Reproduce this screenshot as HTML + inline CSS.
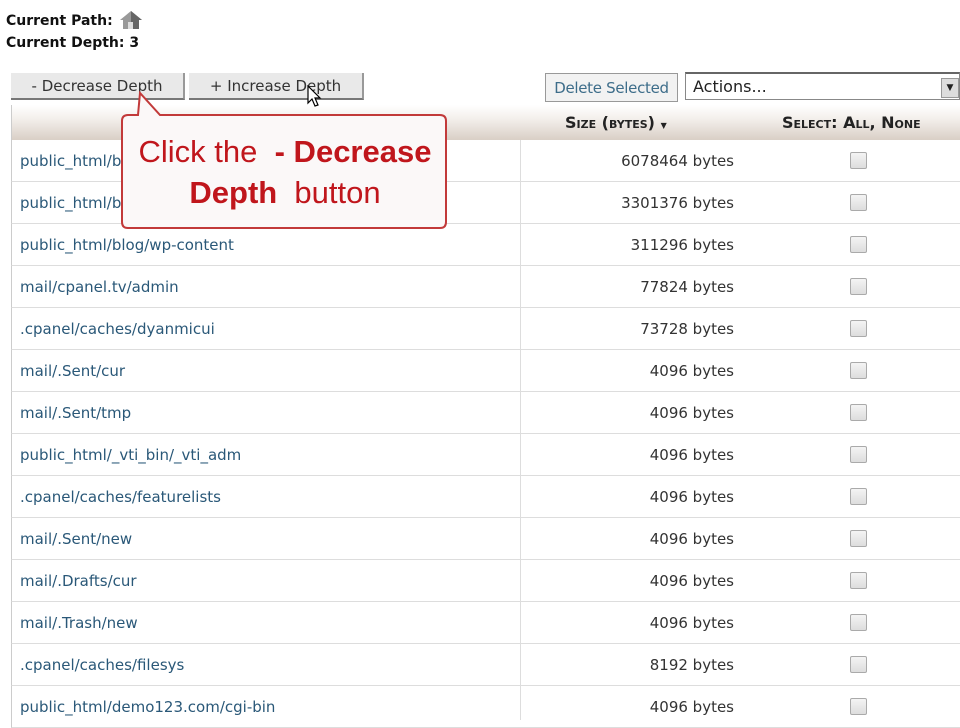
<!DOCTYPE html>
<html><head><style>
body{margin:0;width:960px;height:720px;overflow:hidden;background:#fff;font-family:"DejaVu Sans","Liberation Sans",sans-serif;position:relative}
.a{position:absolute}
.lbl{font-weight:bold;font-size:14px;color:#111;left:6px}
.btn{top:73px;height:25px;background:#e9e9e9;border-right:2px solid #999;border-bottom:2px solid #777;font-size:15px;color:#333;text-align:center;line-height:27px}
.hdr{left:11px;top:105px;width:949px;height:35px;background:linear-gradient(#fff,#f3efeb 40%,#d9cfc6);border-left:1px solid #ccc}
.row{left:11px;width:949px;height:41px;border-bottom:1px solid #ddd;border-left:1px solid #ccc;font-size:15px}
.row .p{position:absolute;left:8px;top:12px;color:#2a5878}
.row .s{position:absolute;right:227px;top:12px;color:#333;width:200px;text-align:right}
.row .c{position:absolute;left:838px;top:12px;width:15px;height:15px;border:1px solid #aaa;background:linear-gradient(#f4f4f4,#ddd);border-radius:2px}
.vl{left:520px;top:140px;width:1px;height:580px;background:#ddd}
.hd{position:absolute;top:8px;font-weight:bold;font-size:16px;font-variant:small-caps;color:#222}
</style></head><body>
<div class="a lbl" style="top:9px">Current Path: <svg width="26" height="22" viewBox="0 0 26 22" style="vertical-align:-6px"><path d="M2 11 L13 2 L24 11 L21 11 L21 20 L5 20 L5 11Z" fill="#999"/><path d="M13 2 L24 11 L21 11 L21 20 L13 20Z" fill="#666"/><rect x="10" y="13" width="5" height="7" fill="#ddd"/></svg></div>
<div class="a lbl" style="top:35px">Current Depth: 3</div>
<div class="a btn" style="left:11px;width:172px">- Decrease Depth</div>
<div class="a btn" style="left:189px;width:173px">+ Increase Depth</div>
<div class="a" style="left:545px;top:73px;width:131px;height:27px;border:1px solid #999;background:#f2f2f2;color:#3d6d8a;font-size:15px;line-height:28px;text-align:center;letter-spacing:-0.3px">Delete Selected</div>
<div class="a" style="left:685px;top:72px;width:275px;height:28px;border:1px solid #888;border-top:2px solid #666;background:#fff;font-size:16px;line-height:26px;color:#222;padding-left:7px;box-sizing:border-box">Actions...<span style="position:absolute;right:0;top:4px;width:16px;height:18px;background:#ddd;border:1px solid #999;font-size:9px;line-height:18px;text-align:center">▼</span></div>
<div class="a hdr"><span class="hd" style="left:553px">Size (bytes) <span style="font-size:8px">▼</span></span><span class="hd" style="left:770px">Select: All, None</span></div>
<div class="a vl"></div>
<div class="a" style="left:0;top:140px;width:960px">
<div style="position:relative">
<div class="a row" style="top:0"><span class="p">public_html/blog</span><span class="s">6078464 bytes</span><span class="c"></span></div>
<div class="a row" style="top:42px"><span class="p">public_html/blog</span><span class="s">3301376 bytes</span><span class="c"></span></div>
<div class="a row" style="top:84px"><span class="p">public_html/blog/wp-content</span><span class="s">311296 bytes</span><span class="c"></span></div>
<div class="a row" style="top:126px"><span class="p">mail/cpanel.tv/admin</span><span class="s">77824 bytes</span><span class="c"></span></div>
<div class="a row" style="top:168px"><span class="p">.cpanel/caches/dyanmicui</span><span class="s">73728 bytes</span><span class="c"></span></div>
<div class="a row" style="top:210px"><span class="p">mail/.Sent/cur</span><span class="s">4096 bytes</span><span class="c"></span></div>
<div class="a row" style="top:252px"><span class="p">mail/.Sent/tmp</span><span class="s">4096 bytes</span><span class="c"></span></div>
<div class="a row" style="top:294px"><span class="p">public_html/_vti_bin/_vti_adm</span><span class="s">4096 bytes</span><span class="c"></span></div>
<div class="a row" style="top:336px"><span class="p">.cpanel/caches/featurelists</span><span class="s">4096 bytes</span><span class="c"></span></div>
<div class="a row" style="top:378px"><span class="p">mail/.Sent/new</span><span class="s">4096 bytes</span><span class="c"></span></div>
<div class="a row" style="top:420px"><span class="p">mail/.Drafts/cur</span><span class="s">4096 bytes</span><span class="c"></span></div>
<div class="a row" style="top:462px"><span class="p">mail/.Trash/new</span><span class="s">4096 bytes</span><span class="c"></span></div>
<div class="a row" style="top:504px"><span class="p">.cpanel/caches/filesys</span><span class="s">8192 bytes</span><span class="c"></span></div>
<div class="a row" style="top:546px"><span class="p">public_html/demo123.com/cgi-bin</span><span class="s">4096 bytes</span><span class="c"></span></div>
</div></div>
<svg class="a" style="left:118px;top:88px" width="336" height="146" viewBox="0 0 336 146">
<path d="M10 27 L20 27 L22 5 L42 27 L322 27 Q328 27 328 33 L328 134 Q328 140 322 140 L10 140 Q4 140 4 134 L4 33 Q4 27 10 27Z" fill="#fbf8f8" stroke="#c23a3a" stroke-width="2"/>
</svg>
<div class="a" style="left:118px;top:131px;width:334px;text-align:center;font-family:'Liberation Sans',sans-serif;font-size:31px;line-height:41px;color:#c0161c;white-space:nowrap">Click the&nbsp; <b>- Decrease<br>Depth</b>&nbsp; button</div>
<svg class="a" style="left:307px;top:85px" width="16" height="24" viewBox="0 0 16 24"><path d="M1 1 L1 18 L5 14 L8 21 L11 20 L8 13 L13 13Z" fill="#fff" stroke="#000" stroke-width="1.2"/></svg>
</body></html>
